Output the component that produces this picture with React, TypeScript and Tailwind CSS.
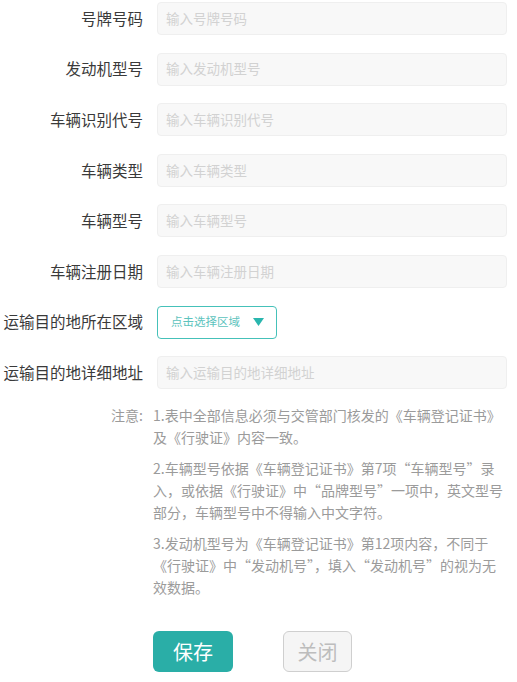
import React from "react";

const fields: { label: string; placeholder?: string; select?: boolean }[] = [
  { label: "号牌号码", placeholder: "输入号牌号码" },
  { label: "发动机型号", placeholder: "输入发动机型号" },
  { label: "车辆识别代号", placeholder: "输入车辆识别代号" },
  { label: "车辆类型", placeholder: "输入车辆类型" },
  { label: "车辆型号", placeholder: "输入车辆型号" },
  { label: "车辆注册日期", placeholder: "输入车辆注册日期" },
  { label: "运输目的地所在区域", select: true },
  { label: "运输目的地详细地址", placeholder: "输入运输目的地详细地址" },
];

export default function App() {
  return (
    <div
      className="w-[517px] h-[682px] bg-white overflow-hidden"
      style={{ fontFamily: '"Microsoft YaHei", "Noto Sans CJK SC", "Noto Sans", sans-serif' }}
    >
      <div className="pt-[2px] flex flex-col gap-y-[17.6px]">
        {fields.map((f) => (
          <div key={f.label} className="flex items-center h-[33px]">
            <div className="w-[143px] shrink-0 text-right text-[15.5px] leading-none text-[#3a3a3a] whitespace-nowrap">
              {f.label}
            </div>
            <div className="ml-[14px]">
              {f.select ? (
                <div className="w-[120px] h-[33px] border border-[#45c1b9] rounded-[4px] bg-white flex items-center pl-[13px] pr-[12px] justify-between">
                  <span className="text-[11.5px] text-[#5cc3bd] leading-none">点击选择区域</span>
                  <svg width="11" height="8" viewBox="0 0 11 8">
                    <path d="M0 0 L11 0 L5.5 8 Z" fill="#2ab6ae" />
                  </svg>
                </div>
              ) : (
                <div className="w-[350px] h-[33px] border border-[#efefef] rounded-[4px] bg-[#f8f8f8] flex items-center pl-[8px]">
                  <span className="text-[13.5px] text-[#d2d2d2] leading-none">{f.placeholder}</span>
                </div>
              )}
            </div>
          </div>
        ))}
      </div>

      <div className="mt-[15px] flex text-[14px] leading-[22px] text-[#9b9b9b]">
        <div className="w-[143px] shrink-0 text-right">注意:</div>
        <div className="ml-[10px] w-[350px]">
          <p className="whitespace-nowrap">
            1.表中全部信息必须与交管部门核发的《车辆登记证书》
            <br />
            及《行驶证》内容一致。
          </p>
          <p className="mt-[9px] whitespace-nowrap">
            2.车辆型号依据《车辆登记证书》第7项“车辆型号”录
            <br />
            入，或依据《行驶证》中“品牌型号”一项中，英文型号
            <br />
            部分，车辆型号中不得输入中文字符。
          </p>
          <p className="mt-[9px] whitespace-nowrap">
            3.发动机型号为《车辆登记证书》第12项内容，不同于
            <br />
            《行驶证》中“发动机号”，填入“发动机号”的视为无
            <br />
            效数据。
          </p>
        </div>
      </div>

      <div className="mt-[33px] flex pl-[153px] gap-[50px]">
        <button className="w-[80px] h-[41px] rounded-[6px] bg-[#2aaea7] text-white text-[20px] leading-none">
          保存
        </button>
        <button className="w-[69px] h-[41px] rounded-[6px] bg-[#f5f5f5] border border-[#cfcfcf] text-[#bdbdbd] text-[20px] leading-none">
          关闭
        </button>
      </div>
    </div>
  );
}
